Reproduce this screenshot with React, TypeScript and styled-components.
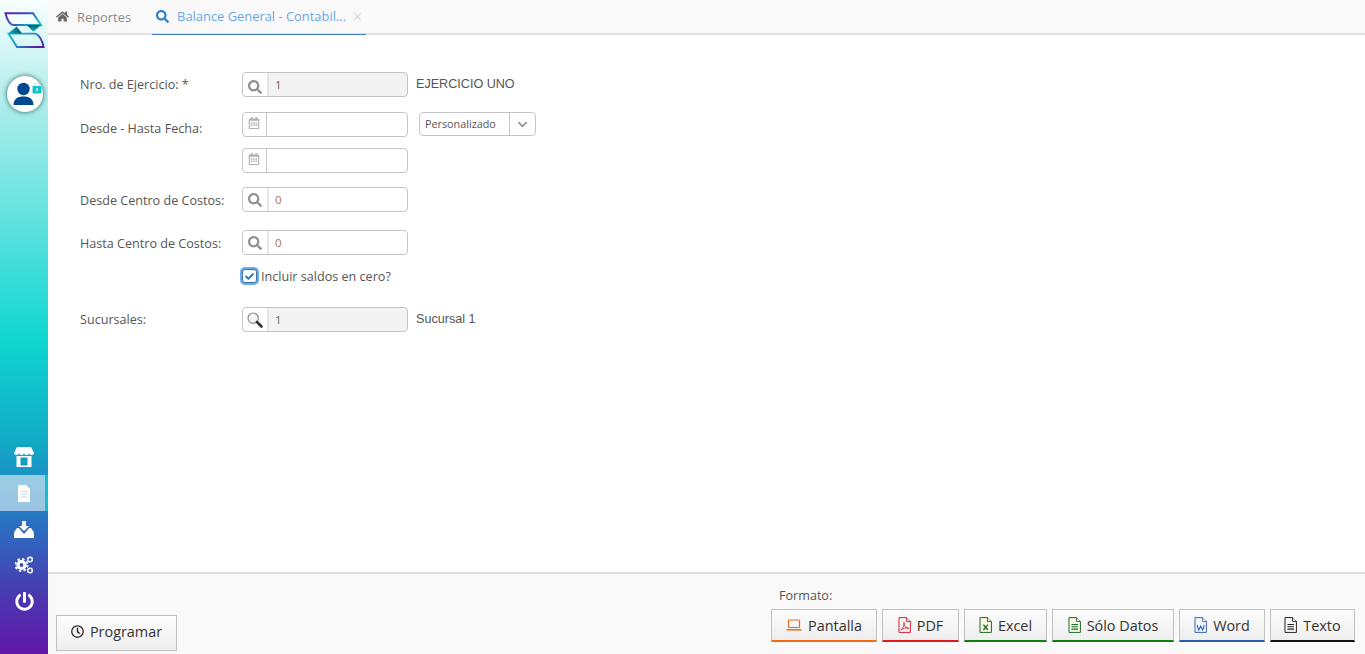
import React from 'react'
import styled, { createGlobalStyle } from 'styled-components'
import { X } from 'lucide-react'
import {
  FaCheck,
  FaChevronDown,
  FaHome,
  FaPowerOff,
  FaRegCalendarAlt,
  FaRegClock,
  FaSearch,
} from 'react-icons/fa'

const GlobalStyle = createGlobalStyle`
  html, body, #root {
    margin: 0;
    height: 100%;
  }

  body {
    font-family: "Open Sans", "Liberation Sans", sans-serif;
    color: #555;
    overflow: hidden;
  }
`

const Logo = () => (
  <svg width="41" height="38" viewBox="0 0 41 38">
    <defs>
      <linearGradient id="logoTop" x1="0" y1="0" x2="1" y2="0.6">
        <stop offset="0" stopColor="#5b21a8" />
        <stop offset="0.6" stopColor="#3a5cbc" />
        <stop offset="1" stopColor="#11b8c4" />
      </linearGradient>
      <linearGradient id="logoBottom" x1="0" y1="0" x2="1" y2="0.6">
        <stop offset="0" stopColor="#11c4cf" />
        <stop offset="0.55" stopColor="#2a8cc4" />
        <stop offset="1" stopColor="#5b21a8" />
      </linearGradient>
      <linearGradient id="logoLeft" x1="0" y1="0" x2="1" y2="0">
        <stop offset="0" stopColor="#0fb4b8" />
        <stop offset="1" stopColor="#0a4f70" />
      </linearGradient>
      <linearGradient id="logoRight" x1="0" y1="0" x2="0" y2="1">
        <stop offset="0" stopColor="#0a4f70" />
        <stop offset="1" stopColor="#10c0c4" />
      </linearGradient>
    </defs>
    <path d="M1.5 2.2H29L37 14H10C5.5 14 2.5 7 1.5 2.2Z" fill="#f4fdfd" stroke="url(#logoTop)" strokeWidth="1.9" />
    <path d="M4.6 22.6H31C35 23 38.6 30 39.6 36H13Z" fill="none" stroke="url(#logoBottom)" strokeWidth="1.9" />
    <path d="M4 22.6L12.7 15.6L18 22.6Z" fill="url(#logoLeft)" />
    <path d="M22.7 14H37L29.3 20.8Z" fill="url(#logoRight)" />
  </svg>
)

const UserBadge = () => (
  <svg width="36" height="36" viewBox="0 0 36 36">
    <circle cx="16.5" cy="13" r="6.2" fill="#00488f" />
    <path d="M6.5 29C6.5 23 10.5 20.5 16.5 20.5S26.5 23 26.5 29Z" fill="#00488f" />
    <path d="M27 10V8.5C27 6.5 32.5 6.5 32.5 8.5V10" fill="none" stroke="#bfeeee" strokeWidth="1.2" />
    <rect x="25.5" y="10" width="9" height="7.5" rx="1" fill="#10c4cc" />
    <rect x="29.4" y="12" width="1.3" height="3.2" fill="#eafcfc" />
  </svg>
)

const StoreIcon = () => (
  <svg width="20" height="20" viewBox="0 0 20 20">
    <path
      d="M3 0H17L20 6A2.5 2 0 0 1 15 6A2.5 2 0 0 1 10 6A2.5 2 0 0 1 5 6A2.5 2 0 0 1 0 6Z"
      fill="#fff"
    />
    <path
      d="M2.5 9H17.5V20H2.5ZM6.5 10.5V18.5H13.5V10.5Z"
      fill="#fff"
      fillRule="evenodd"
    />
  </svg>
)

const PageIcon = () => (
  <svg width="12" height="17" viewBox="0 0 12 17">
    <path d="M0 0H8L12 4V17H0Z" fill="#fff" />
    <path d="M2.5 6H9.5V7.2H2.5ZM2.5 8.6H9.5V9.8H2.5ZM2.5 11.2H9.5V12.4H2.5Z" fill="#cfdff0" />
  </svg>
)

const InboxIcon = () => (
  <svg width="20" height="17" viewBox="0 0 20 17">
    <path d="M8 0H12V5H15L10 10L5 5H8Z" fill="#fff" />
    <path d="M3 7H4.8L10 13L15.2 7H17L20 11.5V17H0V11.5Z" fill="#fff" />
  </svg>
)

const GearsIcon = () => (
  <svg width="19" height="18" viewBox="0 0 19 18">
    <circle cx="6.5" cy="9" r="6" fill="none" stroke="#fff" strokeWidth="2" strokeDasharray="2.4 2.3" />
    <circle cx="6.5" cy="9" r="3.5" fill="none" stroke="#fff" strokeWidth="3.2" />
    <circle cx="15" cy="3.5" r="2.3" fill="none" stroke="#fff" strokeWidth="1.5" />
    <circle cx="15" cy="14.5" r="2.3" fill="none" stroke="#fff" strokeWidth="1.5" />
  </svg>
)

const MagnifierIcon = () => (
  <svg width="16" height="16" viewBox="0 0 16 16">
    <circle cx="6.2" cy="6.2" r="5.2" fill="#f4f4f4" stroke="#8a8a8a" strokeWidth="1.2" />
    <path d="M10 10L14.5 14.5" stroke="#333" strokeWidth="2.6" strokeLinecap="round" />
  </svg>
)

const LaptopIcon = () => (
  <svg width="16" height="12" viewBox="0 0 16 12">
    <rect x="2.5" y="1" width="11" height="7.5" rx="1" fill="none" stroke="#f26a12" strokeWidth="1.2" />
    <path d="M0.5 10.8H15.5" stroke="#f26a12" strokeWidth="1.5" />
  </svg>
)

type Glyph = 'pdf' | 'excel' | 'lines' | 'word'

const FileIcon = ({ color, glyph, fill }: { color: string; glyph: Glyph; fill: string }) => (
  <svg width="13" height="16" viewBox="0 0 13 16">
    <path d="M1 .6H8.5L12.4 4.5V15.4H1Z" fill={fill} stroke={color} strokeWidth="1" />
    <path d="M8.5 .6V4.5H12.4" fill="#fff" stroke={color} strokeWidth="0.9" />
    {glyph === 'pdf' && (
      <path d="M2.8 13C5 11.5 6.6 8 6 5.4C5.6 8 7.6 10.8 10.8 11.2C8 10.6 5 11.2 2.8 13Z" fill="none" stroke={color} strokeWidth="0.9" />
    )}
    {glyph === 'excel' && (
      <path d="M4.4 7.6L8.8 13M8.8 7.6L4.4 13" stroke={color} strokeWidth="1.3" />
    )}
    {glyph === 'lines' && (
      <path d="M3.4 7.5H10M3.4 9.8H10M3.4 12.1H10" stroke={color} strokeWidth="1.1" />
    )}
    {glyph === 'word' && (
      <path d="M3 8L4.8 13L6.7 9L8.6 13L10.4 8" fill="none" stroke={color} strokeWidth="1.1" />
    )}
  </svg>
)

const Shell = styled.div`
  display: flex;
  width: 1365px;
  height: 654px;
  background: #fff;
`

const Sidebar = styled.aside`
  flex: 0 0 48px;
  width: 48px;
  display: flex;
  flex-direction: column;
  align-items: stretch;
  padding-bottom: 35px;
  box-sizing: border-box;
  background: linear-gradient(
    180deg,
    #f7fefe 0%,
    #a9ecea 17%,
    #0fd6d0 52%,
    #12a8c6 68%,
    #2c6cc0 81%,
    #4a38b0 91%,
    #6117a8 100%
  );
`

const LogoSlot = styled.div`
  display: flex;
  padding: 11px 0 0 4px;
  height: 76px;
  box-sizing: border-box;
`

const Avatar = styled.div`
  width: 36px;
  height: 36px;
  margin-left: 7px;
  border-radius: 50%;
  background: #fff;
  box-shadow: 0 0 5px rgba(0, 60, 70, 0.8);
  display: flex;
`

const SideNav = styled.nav`
  margin-top: auto;
  display: flex;
  flex-direction: column;
`

const SideItem = styled.div<{ $active?: boolean }>`
  height: 36px;
  display: flex;
  align-items: center;
  justify-content: center;
  color: #fff;
  font-size: 19px;
  box-sizing: border-box;
  background: ${p => (p.$active ? 'rgba(255, 255, 255, 0.55)' : 'transparent')};
  border-right: 3px solid ${p => (p.$active ? '#0fc0cf' : 'transparent')};
  padding-left: 3px;
`

const Main = styled.main`
  flex: 1;
  display: flex;
  flex-direction: column;
  min-width: 0;
`

const TabBar = styled.div`
  height: 35px;
  flex: none;
  box-sizing: border-box;
  display: flex;
  background: #f9f9f9;
  border-bottom: 2px solid #e0e0e0;
`

const Tab = styled.div<{ $active?: boolean }>`
  height: 35px;
  box-sizing: border-box;
  display: flex;
  align-items: center;
  font-size: 12.9px;
  padding: ${p => (p.$active ? '0 3px 2px 4px' : '0 21px 2px 8px')};
  color: ${p => (p.$active ? '#6ba6e6' : '#8a8a8a')};
  border-bottom: ${p => (p.$active ? '1px solid #3f7fc4' : 'none')};
`

const TabIcon = styled.span<{ $active?: boolean }>`
  display: flex;
  font-size: 13px;
  margin-right: 8px;
  color: ${p => (p.$active ? '#1f7fd0' : '#666')};
`

const TabClose = styled.span`
  display: flex;
  margin-left: 6px;
  color: #999;
`

const Content = styled.div`
  flex: 1;
  padding: 37px 0 0 32px;
  box-sizing: border-box;
  font-size: 12.6px;
`

const Row = styled.div<{ $gap?: number }>`
  display: flex;
  align-items: flex-start;
  height: 25px;
  margin-bottom: ${p => p.$gap ?? 0}px;
`

const Label = styled.label<{ $drop?: number }>`
  width: 162px;
  flex: none;
  line-height: 25px;
  padding-top: ${p => p.$drop ?? 0}px;
  color: #555;
`

const Field = styled.div<{ $readOnly?: boolean }>`
  width: 166px;
  height: 25px;
  box-sizing: border-box;
  display: flex;
  border: 1px solid #c4c4c4;
  border-radius: 4px;
  background: ${p => (p.$readOnly ? '#f3f3f3' : '#fff')};
  flex: none;
`

const Addon = styled.span<{ $drop?: number }>`
  width: 26px;
  flex: none;
  box-sizing: border-box;
  display: flex;
  align-items: center;
  justify-content: center;
  padding-top: ${p => p.$drop ?? 0}px;
  background: #fff;
  border-radius: 4px 0 0 4px;
  border-right: 2px solid #e6e6e6;
  color: #909090;
  font-size: 14px;
`

const CalendarAddon = styled.span`
  width: 24px;
  flex: none;
  box-sizing: border-box;
  display: flex;
  justify-content: center;
  padding: 4px 2px 0 0;
  border-right: 1px solid #c4c4c4;
  color: #b0b0b0;
  font-size: 12px;
`

const FieldValue = styled.span<{ $accent?: boolean }>`
  padding-left: 6px;
  font-size: 11.5px;
  line-height: 23px;
  color: ${p => (p.$accent ? '#a87a3e' : '#666')};
`

const Description = styled.span`
  margin-left: 8px;
  font-family: "Liberation Sans", Arial, sans-serif;
  font-size: 12.6px;
  line-height: 25px;
  color: #555;
`

const Select = styled.div`
  width: 117px;
  height: 24px;
  margin-left: 11px;
  box-sizing: border-box;
  border: 1px solid #c4c4c4;
  border-radius: 4px;
  display: flex;
  font-size: 10.8px;
  line-height: 22px;
  color: #555;
`

const SelectText = styled.span`
  flex: 1;
  padding-left: 5px;
`

const SelectArrow = styled.span`
  width: 25px;
  flex: none;
  display: flex;
  align-items: center;
  justify-content: center;
  border-left: 1px solid #c4c4c4;
  color: #999;
  font-size: 11px;
`

const CheckRow = styled.div`
  display: flex;
  align-items: center;
  height: 16px;
  margin: 13px 0 23px 162px;
  color: #555;
`

const CheckBox = styled.span`
  width: 13px;
  height: 12px;
  flex: none;
  margin-right: 4px;
  display: flex;
  align-items: center;
  justify-content: center;
  border-radius: 3px;
  border: 1px solid #3f6f9f;
  background: #fff;
  color: #1a6fc4;
  font-size: 9px;
  box-shadow: 0 0 0 2px #6aaef0;
`

const Footer = styled.footer`
  height: 82px;
  flex: none;
  box-sizing: border-box;
  display: flex;
  justify-content: space-between;
  align-items: flex-end;
  background: #f9f9f9;
  border-top: 2px solid #dcdcdc;
  padding: 0 10px 12px 8px;
`

const ScheduleSlot = styled.div`
  margin-bottom: -9px;
`

const Formats = styled.div`
  display: flex;
  flex-direction: column;
`

const FormatsLabel = styled.span`
  font-size: 12.6px;
  line-height: 17px;
  margin: 0 0 5px 8px;
  color: #555;
`

const FormatButtons = styled.div`
  display: flex;
  gap: 5px;
`

const Button = styled.button<{ $accent?: string; $width: number }>`
  width: ${p => p.$width}px;
  height: ${p => (p.$accent ? 33 : 36)}px;
  box-sizing: border-box;
  padding: ${p => (p.$accent ? '0' : '0 0 3px 0')};
  display: flex;
  align-items: center;
  justify-content: center;
  gap: 6px;
  font-family: "Open Sans", sans-serif;
  font-size: 14.4px;
  color: #333;
  background: linear-gradient(180deg, #fdfdfd, #eeeeee);
  border: 1px solid #c0c0c0;
  border-bottom: ${p => (p.$accent ? `2px solid ${p.$accent}` : '1px solid #c0c0c0')};
`

const ButtonIcon = styled.span<{ $color: string }>`
  display: flex;
  color: ${p => p.$color};
  font-size: 13px;
`

const formats = [
  { label: 'Pantalla', width: 106, color: '#f26a12', icon: <LaptopIcon /> },
  { label: 'PDF', width: 77, color: '#e01b1b', icon: <FileIcon color="#cf2036" glyph="pdf" fill="#fdf4f4" /> },
  { label: 'Excel', width: 83, color: '#0f7f0f', icon: <FileIcon color="#1a6a2a" glyph="excel" fill="#fbfbe6" /> },
  { label: 'Sólo Datos', width: 122, color: '#0f7f0f', icon: <FileIcon color="#1a6a2a" glyph="lines" fill="#fbfbe6" /> },
  { label: 'Word', width: 86, color: '#2a5caa', icon: <FileIcon color="#3a66b8" glyph="word" fill="#f2f6fd" /> },
  { label: 'Texto', width: 85, color: '#111', icon: <FileIcon color="#222" glyph="lines" fill="#fafafa" /> },
]

const App = () => (
  <Shell>
    <GlobalStyle />
    <Sidebar>
      <LogoSlot>
        <Logo />
      </LogoSlot>
      <Avatar>
        <UserBadge />
      </Avatar>
      <SideNav>
        <SideItem><StoreIcon /></SideItem>
        <SideItem $active><PageIcon /></SideItem>
        <SideItem><InboxIcon /></SideItem>
        <SideItem><GearsIcon /></SideItem>
        <SideItem><FaPowerOff /></SideItem>
      </SideNav>
    </Sidebar>
    <Main>
      <TabBar>
        <Tab>
          <TabIcon><FaHome /></TabIcon>
          Reportes
        </Tab>
        <Tab $active>
          <TabIcon $active><FaSearch /></TabIcon>
          Balance General - Contabil...
          <TabClose><X size={11} strokeWidth={1.25} /></TabClose>
        </Tab>
      </TabBar>
      <Content>
        <Row $gap={15}>
          <Label>Nro. de Ejercicio: *</Label>
          <Field $readOnly>
            <Addon $drop={5}><FaSearch /></Addon>
            <FieldValue>1</FieldValue>
          </Field>
          <Description>EJERCICIO UNO</Description>
        </Row>
        <Row $gap={11}>
          <Label $drop={4}>Desde - Hasta Fecha:</Label>
          <Field>
            <CalendarAddon><FaRegCalendarAlt /></CalendarAddon>
          </Field>
          <Select>
            <SelectText>Personalizado</SelectText>
            <SelectArrow><FaChevronDown /></SelectArrow>
          </Select>
        </Row>
        <Row $gap={14}>
          <Label />
          <Field>
            <CalendarAddon><FaRegCalendarAlt /></CalendarAddon>
          </Field>
        </Row>
        <Row $gap={18}>
          <Label $drop={1}>Desde Centro de Costos:</Label>
          <Field>
            <Addon><FaSearch /></Addon>
            <FieldValue $accent>0</FieldValue>
          </Field>
        </Row>
        <Row>
          <Label $drop={1}>Hasta Centro de Costos:</Label>
          <Field>
            <Addon><FaSearch /></Addon>
            <FieldValue $accent>0</FieldValue>
          </Field>
        </Row>
        <CheckRow>
          <CheckBox><FaCheck /></CheckBox>
          Incluir saldos en cero?
        </CheckRow>
        <Row>
          <Label>Sucursales:</Label>
          <Field $readOnly>
            <Addon><MagnifierIcon /></Addon>
            <FieldValue>1</FieldValue>
          </Field>
          <Description>Sucursal 1</Description>
        </Row>
      </Content>
      <Footer>
        <ScheduleSlot>
          <Button $width={121}>
            <ButtonIcon $color="#222"><FaRegClock /></ButtonIcon>
            Programar
          </Button>
        </ScheduleSlot>
        <Formats>
          <FormatsLabel>Formato:</FormatsLabel>
          <FormatButtons>
            {formats.map(f => (
              <Button key={f.label} $accent={f.color} $width={f.width}>
                <ButtonIcon $color={f.color}>{f.icon}</ButtonIcon>
                {f.label}
              </Button>
            ))}
          </FormatButtons>
        </Formats>
      </Footer>
    </Main>
  </Shell>
)

export default App
